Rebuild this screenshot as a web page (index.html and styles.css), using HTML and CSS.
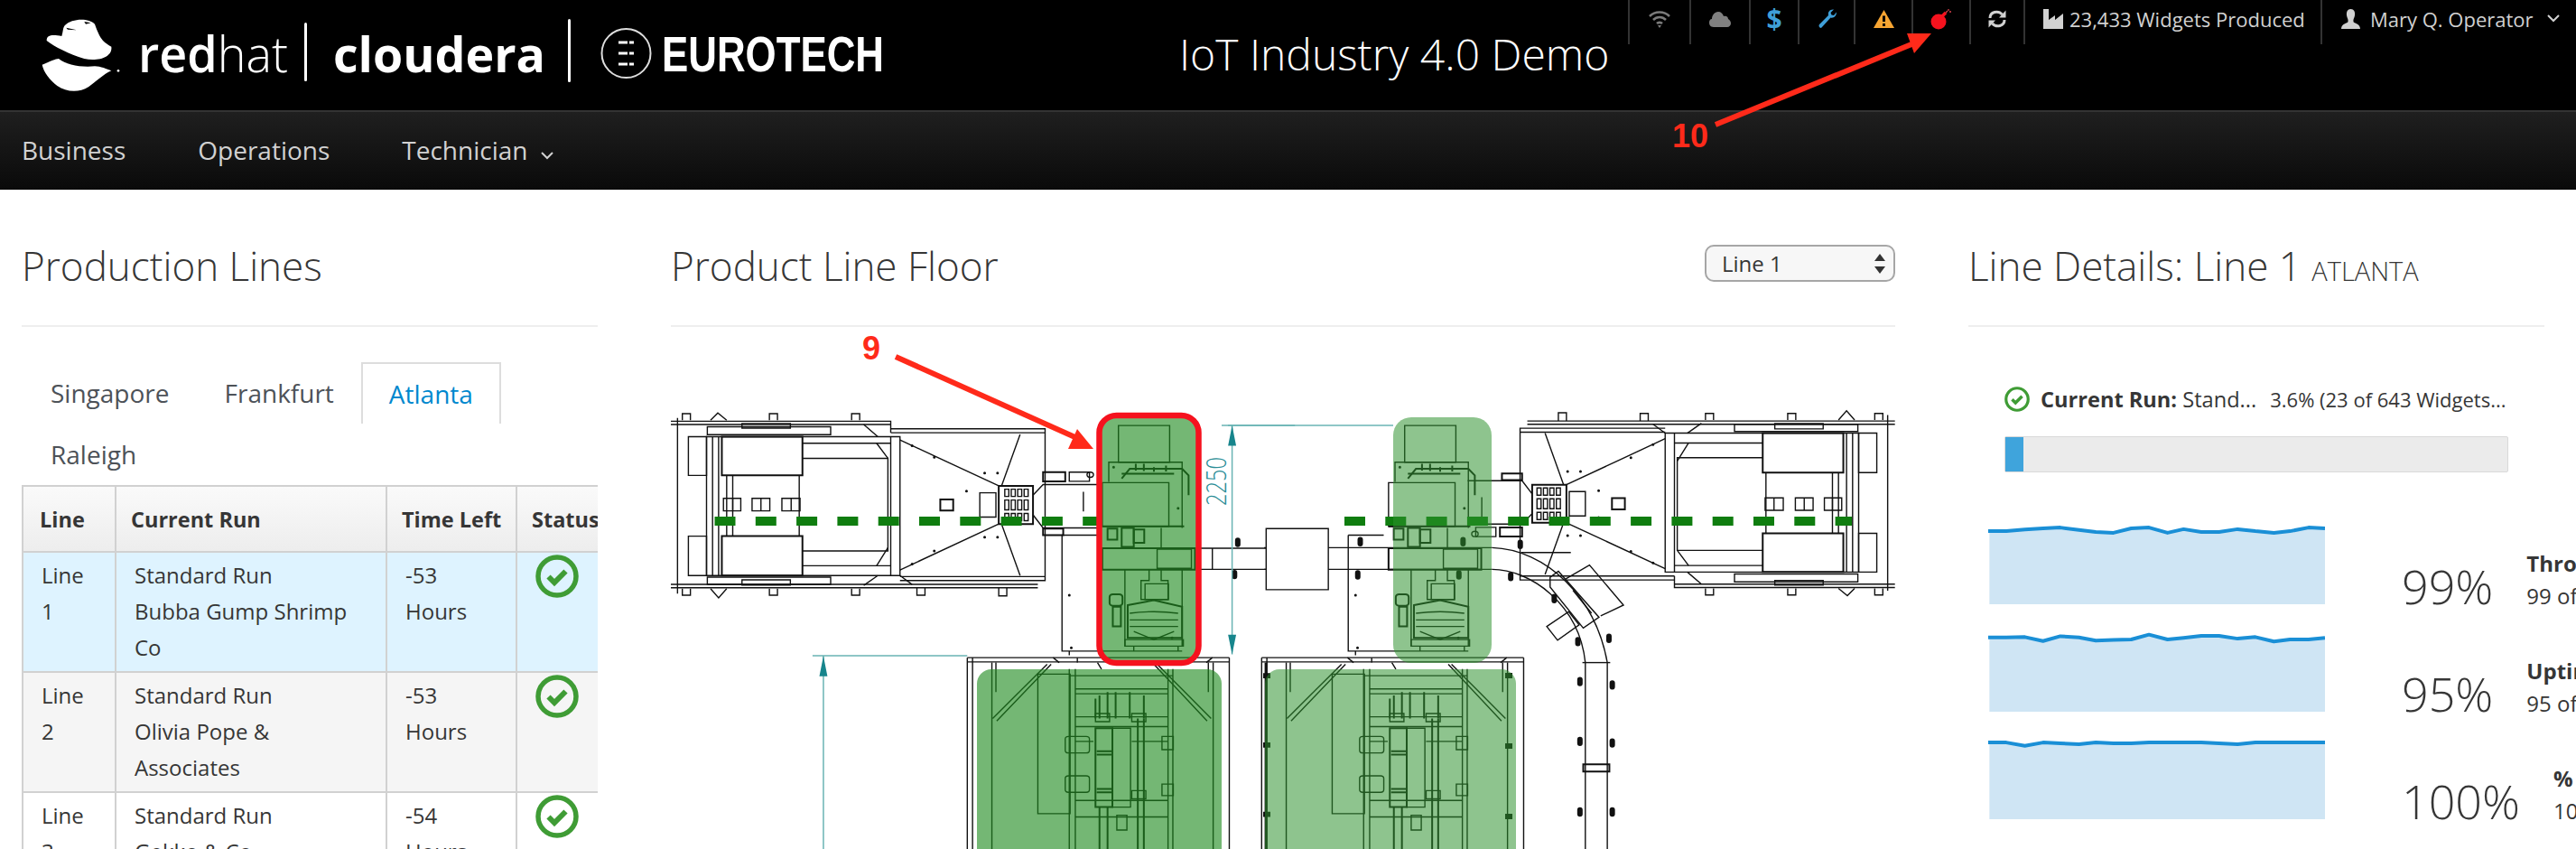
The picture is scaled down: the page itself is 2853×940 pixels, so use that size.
FILE: index.html
```html
<!DOCTYPE html>
<html lang="en">
<head>
<meta charset="utf-8">
<title>IoT Industry 4.0 Demo</title>
<link rel="stylesheet" href="styles.css">
</head>
<body>
<svg class="defs" width="0" height="0" aria-hidden="true">
  <defs>
    <g id="ok">
      <circle cx="24" cy="24" r="21" fill="none" stroke="#3f9c35" stroke-width="5.5"/>
      <path d="M14.5 24.5L21 31L33.5 18.5" fill="none" stroke="#3f9c35" stroke-width="6"/>
    </g>
  </defs>
</svg>
<header class="masthead">
  <svg class="logo" width="1000" height="122" viewBox="0 0 1000 122" role="img" aria-label="Red Hat, Cloudera, Eurotech">
    <g transform="translate(30 10) scale(.3333)" fill="#fff">
      <path d="M125 55C150 30 205 30 225 50C240 90 245 105 280 125C285 160 235 175 190 165C140 150 90 125 65 105C65 85 85 85 115 90C120 75 118 65 125 55Z"/>
      <path d="M50 185C75 175 95 165 105 165C130 185 180 195 225 190C245 190 265 200 280 205C255 215 225 245 205 258C170 280 130 275 100 255C75 235 55 210 50 185Z"/>
      <path d="M130 62L165 70L135 68ZM190 42L212 46L195 50Z" fill="#000"/>
      <circle cx="303" cy="205" r="4"/>
    </g>
    <text class="logo-text" x="153" y="80" font-size="56" textLength="166" lengthAdjust="spacingAndGlyphs"><tspan font-weight="600">red</tspan><tspan font-weight="300">hat</tspan></text>
    <rect x="337" y="25" width="3" height="65" rx="1.5" fill="#fff"/>
    <text class="logo-text" x="369" y="80" font-size="54" font-weight="700" textLength="235" lengthAdjust="spacingAndGlyphs">cloudera</text>
    <rect x="629" y="21" width="3" height="70" rx="1.5" fill="#fff"/>
    <circle cx="693.5" cy="59" r="27" fill="none" stroke="#ddd" stroke-width="2"/>
    <path d="M685 47H702M685 59H702M685 71H702" stroke="#fff" stroke-width="3"/>
    <path d="M696 42V76" stroke="#000" stroke-width="2"/>
    <text class="logo-euro" x="733" y="79" font-size="55" font-weight="700" textLength="246" lengthAdjust="spacingAndGlyphs">EUROTECH</text>
  </svg>
  <div class="app-title">IoT Industry 4.0 Demo</div>
  <ul class="tools">
    <li class="tool">
      <svg width="24" height="20" viewBox="0 0 24 20"><g fill="none" stroke="#7b7b7b" stroke-width="2.6"><path d="M1 7C7 1 17 1 23 7"/><path d="M5 11C9 7 15 7 19 11"/><path d="M9 15C10.500 13.500 13.500 13.500 15 15"/></g><path d="M10 17L12 20L14 17Z" fill="#7b7b7b"/></svg>
    </li>
    <li class="tool">
      <svg width="24" height="18" viewBox="0 0 24 18"><path d="M5 18C1 18 0 15 0 13C0 11 1 9 3 9C3 5 6 1 10 1C13 1 15 3 16 6C19 5 21 7 21 9C23 10 24 12 24 14C24 16 22 18 20 18Z" fill="#808080"/></svg>
    </li>
    <li class="tool tool-dollar">$</li>
    <li class="tool">
      <svg width="21" height="22" viewBox="0 0 21 22"><path d="M2 17L12 7C11 3 14 0 18 0.500L14.500 4L15.500 6.500L18 7L21 3.500C21 8 17.500 10.500 14.500 9.500L4.500 20.500C3 22 0.500 19 2 17Z" fill="#3f9fd8"/></svg>
    </li>
    <li class="tool">
      <svg width="23" height="20" viewBox="0 0 23 20"><path d="M11.500 0L23 20H0Z" fill="#f7a532"/><path d="M10 6.500H13V13H10ZM10 15H13V18H10Z" fill="#000"/></svg>
    </li>
    <li class="tool">
      <svg width="24" height="24" viewBox="0 0 24 24"><circle cx="9" cy="15" r="8.500" fill="#f5121e"/><path d="M13 9L17 5" stroke="#f5121e" stroke-width="3.500"/><path d="M17 5L19 3M20 1V3M23 4H21" stroke="#d8404a" stroke-width="1.300" fill="none"/></svg>
    </li>
    <li class="tool">
      <svg width="20" height="20" viewBox="0 0 20 20"><g fill="none" stroke="#d1d1d1" stroke-width="3"><path d="M2 9C2 2 11 0 15.500 5"/><path d="M18 11C18 18 9 20 4.500 15"/></g><path d="M19.500 0.500V8.500H12ZM.5 19.500V11.500H8Z" fill="#d1d1d1"/></svg>
    </li>
    <li class="tool tool-text">
      <svg width="22" height="22" viewBox="0 0 22 22"><path d="M0 0H6V12L13 7V12L22 5V22H0Z" fill="#d1d1d1"/></svg>
      <span>23,433 Widgets Produced</span>
    </li>
    <li class="tool tool-user">
      <svg width="21" height="22" viewBox="0 0 21 22"><path d="M10.500 0C14 0 15.500 3 15 7C14.600 10 13 11 13.500 14C14 16 21 16 21 22H0C0 16 7 16 7.500 14C8 11 6.400 10 6 7C5.500 3 7 0 10.500 0Z" fill="#d1d1d1"/></svg>
      <span>Mary Q. Operator</span>
      <svg class="chev" width="14" height="9" viewBox="0 0 14 9"><path d="M1 1L7 7L13 1" fill="none" stroke="#d1d1d1" stroke-width="2"/></svg>
    </li>
  </ul>
</header>
<nav class="mainnav">
  <a>Business</a>
  <a>Operations</a>
  <a>Technician<svg class="chev-nav" width="14" height="9" viewBox="0 0 14 9"><path d="M1 1L7 7L13 1" fill="none" stroke="#d1d1d1" stroke-width="2"/></svg></a>
</nav>
<main class="board">
  <section class="panel">
    <div class="panel-head"><h1>Production Lines</h1></div>
    <ul class="tabs">
      <li>Singapore</li>
      <li>Frankfurt</li>
      <li class="active">Atlanta</li>
      <li>Raleigh</li>
    </ul>
    <div class="table-clip">
    <table class="lines">
      <colgroup><col class="c1"><col class="c2"><col class="c3"><col class="c4"></colgroup>
      <thead><tr><th>Line</th><th>Current Run</th><th>Time Left</th><th>Status</th></tr></thead>
      <tbody>
        <tr class="selected"><td>Line 1</td><td>Standard Run<br>Bubba Gump Shrimp Co</td><td>-53 Hours</td><td><svg class="ok" width="48" height="48" viewBox="0 0 48 48"><use href="#ok"/></svg></td></tr>
        <tr class="odd"><td>Line 2</td><td>Standard Run<br>Olivia Pope &amp; Associates</td><td>-53 Hours</td><td><svg class="ok" width="48" height="48" viewBox="0 0 48 48"><use href="#ok"/></svg></td></tr>
        <tr><td>Line 3</td><td>Standard Run<br>Gekko &amp; Co</td><td>-54 Hours</td><td><svg class="ok" width="48" height="48" viewBox="0 0 48 48"><use href="#ok"/></svg></td></tr>
      </tbody>
    </table>
    </div>
  </section>

  <section class="panel">
    <div class="panel-head panel-head-split">
      <h1>Product Line Floor</h1>
      <div class="select">Line 1
        <svg width="12" height="22" viewBox="0 0 12 22"><path d="M6 0L12 8H0ZM6 22L12 14H0Z" fill="#333"/></svg>
      </div>
    </div>
    <svg class="floor" width="1357" height="578" viewBox="743 362 1357 578" role="img" aria-label="Product line floor plan">
      <defs>
        <g id="m1" class="art" transform="translate(720 370) scale(.4464 .3636)">
          <path d="M50 265H597V300M50 275H597M50 762H962M50 772H962M68 255V790"/>
          <path d="M80 262V242H100V262M150 262L168 240L190 262M296 262V242H316V262M500 262V242H520V262"/>
          <path d="M80 775V795H100V775M150 775L170 803L190 775M296 775V795H316V775M500 775V795H520V775M662 772V795H682V772M865 772V797H885V772"/>
          <rect x="142" y="282" width="306" height="24"/><rect x="228" y="272" width="120" height="14"/>
          <rect x="142" y="740" width="306" height="22"/><rect x="228" y="748" width="120" height="16"/>
          <rect x="95" y="312" width="45" height="118"/><rect x="95" y="615" width="45" height="120"/>
          <path d="M140 312H620V735H140ZM155 312V735M170 312V735M597 312V735"/>
          <rect x="178" y="312" width="200" height="118" class="thick"/><rect x="178" y="615" width="200" height="120" class="thick"/>
          <path d="M378 332H597M378 378H590V660H378M378 705H597M190 430V615M205 430V615M370 430V615"/>
          <path d="M562 332L590 378M562 705L590 650M530 275L565 312M530 765L565 735M620 735L650 762"/>
          <rect x="182" y="500" width="43" height="38"/><path d="M205 500V538"/>
          <rect x="253" y="500" width="44" height="38"/><path d="M275 500V538"/>
          <rect x="327" y="500" width="45" height="38"/><path d="M350 500V538"/>
          <path d="M597 288H980V750H620M597 300H980M620 738H980"/>
          <path d="M620 322L865 462M620 718L865 578M918 305L872 462M918 735L872 578"/>
          <rect x="720" y="503" width="32" height="34" class="thick"/><rect x="818" y="483" width="40" height="74"/>
          <rect x="865" y="462" width="85" height="116" class="thick"/>
          <path d="M880 472h10v22h-10zM896 472h10v22h-10zM912 472h10v22h-10zM928 472h10v22h-10zM880 505h10v30h-10zM896 505h10v30h-10zM912 505h10v30h-10zM928 505h10v30h-10zM880 546h10v22h-10zM896 546h10v22h-10zM912 546h10v22h-10zM928 546h10v22h-10z"/>
          <path d="M950 490L975 458H1110M950 550L975 590H1110M1075 480V540"/>
          <rect x="975" y="420" width="55" height="28" class="thick"/><rect x="1040" y="420" width="50" height="28"/><circle cx="1092" cy="428" r="8"/>
          <rect x="975" y="592" width="50" height="20" class="thick"/>
          <path class="dots" d="M650 340h.1M705 375h.1M785 478h.1M785 560h.1M705 660h.1M650 700h.1M830 423h.1M862 423h.1M830 618h.1M862 618h.1"/>
        </g>
        <g id="u1" class="art" transform="translate(720 370) scale(.4464 .3636)">
          <rect x="1162" y="278" width="127" height="112"/>
          <path d="M1138 450V390H1320V590"/>
          <path d="M1170 440L1190 410H1320L1336 430V490" class="thick"/>
          <rect x="1122" y="452" width="165" height="133"/>
          <path d="M1122 585H1325" class="thick"/>
          <path d="M1170 425h130M1205 395v20M1225 395v22M1250 405v14M1280 400v18" class="thick"/>
          <rect x="1135" y="592" width="24" height="34" class="thick"/><rect x="1170" y="590" width="30" height="58" class="thick"/><rect x="1200" y="595" width="26" height="40" class="thick"/>
          <path d="M1268 590V650"/>
          <rect x="1122" y="652" width="230" height="65" class="thick"/>
          <rect x="1258" y="655" width="85" height="58"/>
          <path d="M1178 717V950M1320 717V950M1238 717V750H1218V808H1285V750H1268V717"/>
          <rect x="1228" y="760" width="58" height="48"/>
          <path d="M1185 825L1250 810L1320 830V925H1185Z" class="thick"/>
          <path d="M1190 850Q1250 840 1310 850M1190 870H1310M1190 890H1310M1200 905L1250 930L1300 905"/>
          <rect x="1178" y="930" width="145" height="20"/>
          <rect x="1140" y="792" width="32" height="35" rx="8" class="thick"/><rect x="1148" y="830" width="20" height="60" class="thick"/>
          <path d="M1022 612V965H1320M1022 612H1110M1040 965V978M1200 950V965M1310 950V965"/>
          <path class="dots" d="M1040 795h.1M1045 955h.1M1150 405h.1M1310 530h.1M1295 925h.1"/>
        </g>
        <g id="l1" class="art" transform="translate(720 370) scale(.4464 .3636)">
          <path d="M787 985V1568M800 985V1568M1437 985V1568M787 985H1437M787 998H1437"/>
          <path d="M848 1000V1568M858 1000V1090M1397 1000V1568M1385 1000V1090"/>
          <path d="M850 1170L985 1005M860 1178L995 1005M1392 1170L1258 1005M1382 1178L1250 1005"/>
          <path d="M1015 1000L1000 985M1060 1000V985M1120 1020L1110 1000M1380 1000L1395 985"/>
          <rect x="962" y="1035" width="80" height="425"/>
          <path d="M1040 1020V1568M1055 1020V1568M1285 1020V1568M1297 1020V1568M1040 1040H1297M1055 1080H1285M1055 1095H1285M1055 1165H1285M1055 1195H1285M1055 1240H1100M1195 1240H1285M1055 1420H1285M1055 1470H1285"/>
          <rect x="1105" y="1200" width="42" height="240" class="thick"/><rect x="1147" y="1200" width="45" height="240"/>
          <path d="M1105 1110V1170M1115 1100V1170M1135 1090V1170M1155 1090V1170M1190 1090V1170M1225 1100V1170" class="thick"/>
          <rect x="1030" y="1225" width="60" height="50" rx="8"/><rect x="1030" y="1345" width="60" height="50" rx="8"/>
          <rect x="1270" y="1225" width="28" height="40"/><rect x="1270" y="1370" width="28" height="35"/>
          <rect x="1195" y="1390" width="35" height="25"/><rect x="1105" y="1155" width="35" height="25"/><rect x="1195" y="1155" width="35" height="25"/>
          <path d="M1210 1170V1568M1225 1170V1568M1115 1440V1568M1135 1440V1568" class="thick"/>
          <path d="M1108 1270H1145M1108 1280H1145M1108 1385H1145M1108 1395H1145" class="thick"/>
          <rect x="1158" y="1465" width="25" height="45"/>
        </g>
      </defs>
      <use href="#m1"/>
      <use href="#m1" transform="rotate(180 1420.500 558.400)"/>
      <use href="#u1"/>
      <use href="#u1" x="317"/>
      <use href="#l1"/>
      <use href="#l1" x="326"/>
      <g class="art" transform="translate(1400 370) scale(.4591 .3636)">
        <rect x="5" y="592" width="150" height="186"/>
        <path d="M0 650H5M155 650H550M155 716H550M0 716H5"/>
        <path d="M550 650C680 655 800 800 828 1000V1568M550 716C640 716 760 820 775 1000V1568"/>
        <path d="M768 1000H835"/>
        <rect x="770" y="1310" width="63" height="22" class="thick"/>
        <path d="M620 665H740"/>
        <path d="M728 745L785 703L867 825L812 858"/>
        <path d="M690 740L710 722L808 862L770 895L690 770Z"/>
        <path d="M682 890L735 845L760 885L708 932Z"/>
        <path d="M745 780L790 850"/>
        <path class="bolt" d="M232 626v12M226 727v12M480 626v12M470 727v12M618 634v12M595 732v12M700 799v12M757 930v12M832 920v12M762 1052v12M840 1062v12M762 1234v12M840 1239v12M762 1449v12M840 1449v12"/>
      </g>
      <g class="art" transform="translate(720 370) scale(.4464 .3636)">
        <path d="M1395 652H1530M1395 716H1530M1365 652H1395V716H1365"/>
        <path class="bolt" d="M1458 628v12M1450 726v12"/>
        <path class="rail" d="M1528 1000V1568"/>
        <path class="pad" d="M1530 1032v16M1530 1243v16M1530 1454v16"/>
      </g>
      <path class="pad" d="M1671 745v6M1671 823v6M1671 901v6"/>
      <g class="dash">
        <line x1="791.500" y1="577" x2="1218" y2="577"/>
        <line x1="1489" y1="577" x2="2051" y2="577"/>
      </g>
      <g class="dim" transform="translate(720 370) scale(.4464 .3636)">
        <path d="M1418 278H1600M1444 278V975M403 979H787M430 979V1568"/>
      </g>
      <path class="dim-wide" d="M1360 471H1543"/>
      <g class="dim-head" transform="translate(720 370) scale(.4464 .3636)">
        <path d="M1444 278L1434 340H1454ZM1444 975L1434 915H1454ZM430 980L420 1042H440Z"/>
      </g>
      <text class="dim-text" transform="translate(1358 560) rotate(-90)" textLength="54" lengthAdjust="spacingAndGlyphs">2250</text>
      <rect class="zone zone-a" x="1082" y="741" width="271" height="240" rx="16"/>
      <rect class="zone zone-b" x="1401" y="741" width="278" height="240" rx="16"/>
      <rect class="zone zone-b" x="1543" y="462" width="109" height="272" rx="20"/>
      <rect class="zone zone-a" x="1218" y="461" width="109" height="272" rx="18"/>
      <rect class="zone-frame" x="1217.500" y="460" width="110" height="274" rx="19"/>
    </svg>
  </section>

  <section class="panel">
    <div class="panel-head"><h1>Line Details: Line 1 <small>ATLANTA</small></h1></div>
    <div class="details">
      <div class="run">
        <svg width="28" height="28" viewBox="0 0 48 48"><use href="#ok"/></svg>
        <span class="run-name"><b>Current Run:</b> Stand...</span>
        <span class="run-count">3.6% (23 of 643 Widgets...</span>
      </div>
      <div class="progress"><div class="progress-bar"></div></div>
    </div>
    <div class="metrics">
      <div class="metric">
        <svg class="spark" viewBox="173 760 800 198" preserveAspectRatio="none">
          <polygon class="area" points="178,776 218,776 262,772 305,769 346,767 390,773 430,778 472,780 514,769 556,767 600,780 638,771 680,778 722,778 766,771 808,776 852,780 890,776 934,767 973,769 973,958 178,958"/>
          <polyline class="trend" points="175,776 218,776 262,772 305,769 346,767 390,773 430,778 472,780 514,769 556,767 600,780 638,771 680,778 722,778 766,771 808,776 852,780 890,776 934,767 973,769"/>
        </svg>
        <div class="pct">99%</div>
        <div class="label"><b>Throughput</b><span>99 of 100</span></div>
      </div>
      <div class="metric">
        <svg class="spark" viewBox="173 1030 800 198" preserveAspectRatio="none">
          <polygon class="area" points="178,1043 218,1043 262,1042 305,1052 346,1040 390,1043 430,1051 472,1049 514,1048 556,1036 600,1048 638,1044 680,1039 722,1039 766,1046 808,1042 852,1053 890,1048 934,1048 973,1044 973,1228 178,1228"/>
          <polyline class="trend" points="175,1043 218,1043 262,1042 305,1052 346,1040 390,1043 430,1051 472,1049 514,1048 556,1036 600,1048 638,1044 680,1039 722,1039 766,1046 808,1042 852,1053 890,1048 934,1048 973,1044"/>
        </svg>
        <div class="pct">95%</div>
        <div class="label"><b>Uptime</b><span>95 of 100</span></div>
      </div>
      <div class="metric">
        <svg class="spark" viewBox="173 1297 800 198" preserveAspectRatio="none">
          <polygon class="area" points="178,1304 218,1304 262,1312 305,1304 346,1306 390,1308 430,1304 472,1306 514,1306 556,1304 600,1304 640,1304 680,1304 722,1306 766,1308 808,1304 852,1304 890,1304 934,1304 973,1304 973,1495 178,1495"/>
          <polyline class="trend" points="175,1304 218,1304 262,1312 305,1304 346,1306 390,1308 430,1304 472,1306 514,1306 556,1304 600,1304 640,1304 680,1304 722,1306 766,1308 808,1304 852,1304 890,1304 934,1304 973,1304"/>
        </svg>
        <div class="pct">100%</div>
        <div class="label"><b>% In Spec</b><span>100 of 100</span></div>
      </div>
    </div>
  </section>
</main>
<svg class="callouts" width="2853" height="940" viewBox="0 0 2853 940">
  <path class="callout-line" d="M1900 138L2122 47"/>
  <path class="callout-head" d="M2139 37L2112 37L2120 59Z"/>
  <text class="callout-text" x="1852" y="163">10</text>
  <path class="callout-line" d="M992 395L1195 486"/>
  <path class="callout-head" d="M1211 497L1193 475L1183 497Z"/>
  <text class="callout-text" x="955" y="398">9</text>
</svg>
</body>
</html>
```
FILE: styles.css
```css
* { box-sizing: border-box; }
html, body { margin: 0; padding: 0; }
body {
  position: relative;
  width: 2853px;
  height: 940px;
  overflow: hidden;
  background: #fff;
  color: #363636;
  font-family: "Open Sans", "Liberation Sans", sans-serif;
  font-size: 24px;
}
.defs { position: absolute; }

/* masthead */
.masthead { display: flex; height: 122px; background: #000; color: #d1d1d1; }
.logo { flex: none; display: block; }
.logo-text { font-family: "Open Sans", sans-serif; fill: #fff; }
.logo-euro { font-family: "Liberation Sans", sans-serif; fill: #fff; }
.app-title {
  margin: 30px 0 0 306px;
  width: 480px;
  font-size: 48px;
  line-height: 60px;
  font-weight: 300;
  color: #fff;
  white-space: nowrap;
}
.tools {
  list-style: none;
  margin: 0 0 0 17px;
  padding: 0;
  height: 45px;
  flex: none;
  display: grid;
  grid-template-columns: 68px 66px 54px 62px 64px 64px 60px 329px 283px;
}
.tool {
  display: flex;
  align-items: center;
  justify-content: center;
  padding-bottom: 8px;
  border-left: 2px solid #333;
  font-size: 22px;
  white-space: nowrap;
}
.tool-dollar { color: #3f9fd8; font-size: 30px; font-weight: 700; }
.tool-text { justify-content: flex-start; padding-left: 20px; gap: 7px; }
.tool-user { justify-content: flex-start; padding-left: 21px; gap: 11px; }
.chev { margin-left: 4px; }

/* nav */
.mainnav {
  display: flex;
  gap: 80px;
  height: 88px;
  padding: 0 0 2px 24px;
  align-items: center;
  border-top: 2px solid #333;
  background: linear-gradient(#1f1f1f, #0a0a0a);
  color: #d1d1d1;
  font-size: 28px;
}
.chev-nav { margin-left: 14px; }

/* board */
.board {
  display: grid;
  grid-template-columns: 638px 1356px 638px;
  column-gap: 81px;
  padding-left: 24px;
  height: 730px;
  overflow: hidden;
}
.panel { min-width: 0; }
.panel-head {
  height: 152px;
  padding-top: 57px;
  border-bottom: 2px solid #eee;
}
.panel-head-split {
  display: flex;
  justify-content: space-between;
  align-items: flex-start;
}
h1 {
  margin: 0;
  font-size: 44px;
  line-height: 54px;
  font-weight: 300;
  color: #363636;
  white-space: nowrap;
}
h1 small { font-size: 29px; font-weight: 300; }
.select {
  display: flex;
  justify-content: space-between;
  align-items: center;
  width: 211px;
  height: 41px;
  margin-top: 4px;
  padding: 0 9px 0 17px;
  border: 2px solid #a6a6a6;
  border-radius: 10px;
  background: #f7f7f7;
  font-size: 24px;
  color: #363636;
}

/* tabs */
.tabs {
  list-style: none;
  display: flex;
  flex-wrap: wrap;
  margin: 39px 0 0;
  padding: 0;
  font-size: 28px;
  color: #4d5258;
}
.tabs li {
  height: 68px;
  padding: 0 30px 0 31px;
  line-height: 68px;
}
.tabs li:first-child { padding-left: 32px; }
.tabs .active {
  padding: 0 29px;
  border: 2px solid #ddd;
  border-bottom: 0;
  line-height: 66px;
  background: #fff;
  color: #0088ce;
}
.tabs .active + li { padding-left: 32px; }

/* table */
.table-clip { overflow: hidden; }
.lines {
  width: 638px;
  table-layout: fixed;
  border-collapse: collapse;
  border: 2px solid #d1d1d1;
  font-size: 24px;
  line-height: 40px;
}
.c1 { width: 103px; }
.c2 { width: 300px; }
.c3 { width: 144px; }
.c4 { width: 91px; }
.lines th {
  height: 73px;
  padding: 0 0 0 16px;
  text-align: left;
  font-size: 23.500px;
  font-weight: 700;
  white-space: nowrap;
  overflow: hidden;
  border: 2px solid #d1d1d1;
  border-top: 0;
  background: linear-gradient(#fafafa, #ededed);
}
.lines th:first-child { padding-left: 18px; }
.lines td {
  padding: 5px 24px 6px 20px;
  vertical-align: top;
  border: 2px solid #d1d1d1;
}
.selected td { background: #def3ff; }
.odd td { background: #f5f5f5; }
.lines td:last-child { padding: 0 0 0 20px; }
.ok { display: block; margin-top: 2px; }

/* floor plan */
.floor { display: block; }
.art { fill: none; stroke: #111; stroke-width: 1.4; }
.art * { vector-effect: non-scaling-stroke; }
.art .thick { stroke-width: 2; }
.art .dots { stroke-width: 3; stroke-linecap: round; }
.art .bolt { stroke-width: 6; stroke-linecap: round; }
.art .rail { stroke-width: 3; }
.pad { fill: none; stroke: #111; stroke-width: 8; vector-effect: non-scaling-stroke; }
.dash line { stroke: #0f7d0f; stroke-width: 10; stroke-dasharray: 23 22.300; }
.dim * { vector-effect: non-scaling-stroke; }
.dim path, .dim-wide { fill: none; stroke: #6ab4b4; stroke-width: 1.500; }
.dim-head path { fill: #17858c; }
.dim-text { font-size: 32px; font-weight: 300; fill: #2a8d96; }
.zone { stroke: none; }
.zone-a { fill: #1f8a1f; opacity: .62; }
.zone-b { fill: #2f922f; opacity: .54; }
.zone-frame { fill: none; stroke: #f5121e; stroke-width: 6.500; }

/* details */
.details { padding: 0 0 0 40px; }
.run {
  display: flex;
  align-items: center;
  height: 30px;
  margin-top: 65px;
  white-space: nowrap;
  font-size: 24px;
}
.run svg { flex: none; }
.run-name { margin-left: 12px; font-size: 23.600px; }
.run-count { margin-left: 15px; font-size: 22px; }
.progress {
  width: 558px;
  height: 40px;
  margin-top: 26px;
  border: 1px solid #d9d9d9;
  border-radius: 2px;
  background: #ebebeb;
}
.progress-bar { width: 20px; height: 100%; background: #3fa4dc; }
.metrics { margin-top: 27px; padding-left: 21px; }
.metric { display: flex; align-items: flex-end; height: 119px; white-space: nowrap; }
.spark { flex: none; display: block; width: 374px; height: 88px; }
.area { fill: #cfe5f4; }
.trend { fill: none; stroke: #1a8fd6; stroke-width: 4; vector-effect: non-scaling-stroke; stroke-linejoin: round; }
.pct { margin-left: 85px; margin-bottom: -14px; font-size: 52px; line-height: 68px; font-weight: 300; }
.label { display: flex; flex-direction: column; margin-left: 37px; line-height: 36px; font-size: 24px; margin-bottom: -9px; }

/* callouts */
.callouts { position: absolute; top: 0; left: 0; pointer-events: none; }
.callout-line { fill: none; stroke: #ff2a1a; stroke-width: 6; }
.callout-head { fill: #ff2a1a; }
.callout-text { font-family: "Liberation Sans", sans-serif; font-weight: 700; font-size: 36px; fill: #ff2a1a; }
```
